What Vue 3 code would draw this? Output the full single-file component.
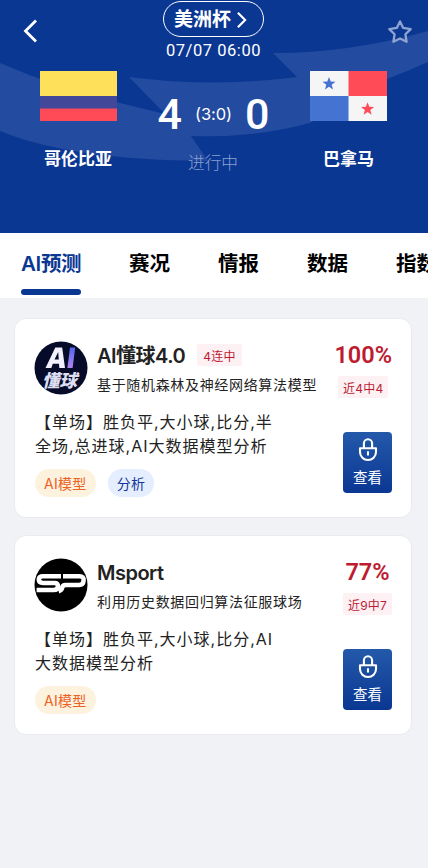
<script setup>
const tabs = ['AI预测', '赛况', '情报', '数据', '指数']
const cards = [
  { logo: 'ai', name: 'AI懂球4.0', streak: '4连中', sub: '基于随机森林及神经网络算法模型', rate: '100%', recent: '近4中4', lines: ['【单场】胜负平,大小球,比分,半', '全场,总进球,AI大数据模型分析'], tags: ['AI模型', '分析'] },
  { logo: 'sp', name: 'Msport', streak: '', sub: '利用历史数据回归算法征服球场', rate: '77%', recent: '近9中7', lines: ['【单场】胜负平,大小球,比分,AI', '大数据模型分析'], tags: ['AI模型'] }
]
</script>

<template>
  <div class="page">
    <header class="hero">
      <svg class="swoosh" viewBox="0 0 428 233" aria-hidden="true">
        <path d="M0 63Q58 88 116 102L165 114L129 77Q215 88 297 77L273 53Q350 53 428 31V62Q408 71 387 79L310 123Q255 138 191 136L208 161Q70 160 0 131Z" fill="#234ba0" />
      </svg>
      <svg class="back" viewBox="0 0 16 26" aria-hidden="true"><path d="M14 2.5L3.5 13L14 23.5" fill="none" stroke="#fff" stroke-width="2.8" /></svg>
      <div class="team">
        <svg class="flag" viewBox="0 0 77 50" preserveAspectRatio="none">
          <path fill="#ffe05b" d="M0 0h77v25H0z" /><path fill="#43479a" d="M0 25h77v12.5H0z" /><path fill="#ff4b58" d="M0 37.5h77V50H0z" />
        </svg>
        <div class="team-name">哥伦比亚</div>
      </div>
      <div class="middle">
        <div class="league"><span>美洲杯</span>
          <svg viewBox="0 0 12 20"><path d="M2 2L10 10L2 18" fill="none" stroke="#fff" stroke-width="2.4" /></svg>
        </div>
        <div class="time">07/07 06:00</div>
        <div class="score"><b>4</b><span>(3:0)</span><b>0</b></div>
        <div class="state">进行中</div>
      </div>
      <div class="team away">
        <svg class="flag" viewBox="0 0 77 50" preserveAspectRatio="none">
          <path fill="#f5f5f5" d="M0 0h77v50H0z" /><path fill="#ff4b58" d="M38.5 0H77v25H38.5z" /><path fill="#4573d1" d="M0 25h38.5v25H0z" />
          <path fill="#4573d1" d="M19 6l1.7 4.5 4.8.2-3.8 3 1.3 4.8-4-2.7-4 2.7 1.3-4.8-3.8-3 4.8-.2z" />
          <path transform="translate(38.6 25.3)" fill="#ff4b58" d="M19 6l1.7 4.5 4.8.2-3.8 3 1.3 4.8-4-2.7-4 2.7 1.3-4.8-3.8-3 4.8-.2z" />
        </svg>
        <div class="team-name">巴拿马</div>
      </div>
      <svg class="star" viewBox="0 0 26 26"><path d="M13 2.4L16.2 8.9L23.7 10.1L18.4 15.3L19.6 22.8L13 19.4L6.4 22.8L7.6 15.3L2.3 10.1L9.8 8.9Z" fill="none" stroke="#8fa4d2" stroke-width="2.3" stroke-linejoin="round" /></svg>
    </header>
    <nav class="tabs">
      <div v-for="(t, i) in tabs" :key="t" class="tab" :class="{ active: i === 0 }"><span>{{ t }}</span></div>
    </nav>
    <main class="list">
      <article v-for="c in cards" :key="c.name" class="card">
        <div class="top">
          <svg v-if="c.logo === 'ai'" class="avatar" viewBox="0 0 54 54">
            <defs>
              <linearGradient id="g" x1="0" y1="0" x2="0" y2="1"><stop offset="0" stop-color="#5267ef" /><stop offset="1" stop-color="#b184f0" /></linearGradient>
              <clipPath id="round"><circle cx="27" cy="27" r="26.5" /></clipPath>
            </defs>
            <circle cx="27" cy="27" r="26.5" fill="#050b28" />
            <path fill="#f1f0fc" fill-rule="evenodd" d="M11.5 27L21.3 6.4H28.2L31 27H25.3L25 22.8H18.8L17.3 27ZM20.5 18.5H24.8L24.2 11Z" />
            <path fill="url(#g)" d="M36 6.4H41.2L38.6 27H33.4Z" />
            <g clip-path="url(#round)"><text x="8" y="46" class="logo-text">懂球</text></g>
          </svg>
          <svg v-else class="avatar" viewBox="0 0 54 54">
            <circle cx="27" cy="27" r="26.5" fill="#000" />
            <g fill="none" stroke="#fff" stroke-width="4.6" stroke-linejoin="round">
              <path d="M27 18.2H9Q4.8 18.2 4.8 21.6Q4.8 25 9 25H20.5Q24 25 24 28.3Q24 32 19.5 32H2.6" />
              <path d="M29 18.2H45.5Q50 18.2 49.6 22.6Q49.2 27 45 27H31.5Q28.8 27 28.3 29.3Q27.6 32.4 24.6 33.2" />
            </g>
          </svg>
          <div class="title">
            <div class="name-row"><h2>{{ c.name }}</h2><span v-if="c.streak" class="badge">{{ c.streak }}</span></div>
            <p>{{ c.sub }}</p>
          </div>
          <div class="rate"><strong>{{ c.rate }}</strong><span class="badge">{{ c.recent }}</span></div>
        </div>
        <div class="bottom">
          <div class="info">
            <div class="desc"><div v-for="l in c.lines" :key="l">{{ l }}</div></div>
            <div class="tags"><span v-for="(t, i) in c.tags" :key="t" :class="{ blue: i === 1 }">{{ t }}</span></div>
          </div>
          <button class="view">
            <svg viewBox="0 0 20 26"><path d="M5.9 11V6.3a4.1 4.1 0 0 1 8.2 0V11M2 11.2H18V15a8 8 0 0 1-16 0ZM10 14.2V18.4" fill="none" stroke="#fff" stroke-width="2.1" stroke-linejoin="round" /></svg>
            <span>查看</span>
          </button>
        </div>
      </article>
    </main>
  </div>
</template>

<style>
body { margin: 0; background: #f0f2f5; overflow: hidden; }
</style>
<style scoped>
* { box-sizing: border-box; }
.page { width: 428px; height: 868px; overflow: hidden; background: #f0f2f5; color: #222; font-family: Inter, "Noto Sans CJK SC", sans-serif; white-space: nowrap; }
.hero { position: relative; isolation: isolate; display: grid; grid-template-columns: 39px 78px 193px 77px 41px; height: 233px; background: #0a3792; color: #fff; overflow: hidden; }
.swoosh { position: absolute; z-index: -1; inset: 0; width: 428px; height: 233px; }
.back { width: 16px; height: 26px; margin: 18px 0 0 22px; }
.star { width: 26px; height: 26px; margin: 19px 0 0 0; }
.team { padding-top: 71px; display: flex; flex-direction: column; align-items: center; }
.flag { width: 77px; height: 50px; flex: none; }
.team-name { margin-top: 26px; line-height: 24px; font-size: 17px; font-weight: 700; }
.middle { display: flex; flex-direction: column; align-items: center; padding-top: 1px; }
.league { width: 101px; height: 36px; padding: 2px 6px 0 0; border: 1.5px solid #fff; border-radius: 18px; display: flex; align-items: center; justify-content: center; gap: 5px; font-size: 19px; font-weight: 700; line-height: 30px; }
.league svg { width: 11px; height: 18px; }
.time { margin-top: 4px; font: 16.5px/20px Roboto, sans-serif; letter-spacing: .55px; }
.score { display: flex; align-items: center; justify-content: center; gap: 13px; height: 50px; margin-top: 28px; }
.score b { font-family: Roboto, sans-serif; font-size: 43px; font-weight: 500; line-height: 50px; }
.score span { font-size: 16.5px; line-height: 22px; letter-spacing: -.1px; }
.state { margin: 12px 1px 0 0; font-size: 16.7px; line-height: 24px; font-weight: 300; color: #8ba0d0; }
.tabs { display: flex; gap: 48px; height: 65px; padding-left: 21px; background: #fff; color: #000; overflow: hidden; }
.tab { flex: none; width: 41px; height: 62px; padding-top: 16px; font-size: 20.5px; line-height: 30px; font-weight: 700; }
.tab.active { width: 60px; color: #0a3792; font-weight: 600; letter-spacing: -.35px; display: flex; flex-direction: column; justify-content: space-between; }
.tab.active::after { content: ""; height: 6px; border-radius: 3px; background: #0a3792; }
.list { display: flex; flex-direction: column; gap: 17px; padding: 20px 16px 0 14px; }
.card { height: 200px; padding: 22px 19px 19px 20px; border-radius: 12px; border: 1px solid #e9ebee; background: #fff; }
.top { display: flex; height: 62px; }
.avatar { width: 54px; height: 54px; flex: none; margin-left: -1px; }
.logo-text { font: italic 900 17.5px "Noto Sans CJK SC", sans-serif; fill: #dedff2; }
.title { flex: 1; margin-left: 9px; }
.name-row { display: flex; align-items: center; gap: 12px; height: 28px; }
h2 { margin: 0; padding-top: 1px; font-size: 20px; line-height: 28px; font-weight: 600; letter-spacing: -.5px; }
p { margin: 5px 0 0; font-size: 14px; line-height: 22px; letter-spacing: .67px; }
.badge { display: flex; align-items: center; height: 22px; padding: 0 6px; background: #fdf1f3; color: #be1b35; font-size: 12px; letter-spacing: .2px; border-radius: 2px; }
.rate { display: flex; flex-direction: column; align-items: center; gap: 7px; }
.rate strong { font-family: Roboto, sans-serif; font-size: 23.5px; line-height: 28px; font-weight: 600; color: #be1b30; }
.rate .badge { padding: 0 5px; }
.bottom { display: flex; justify-content: space-between; height: 97px; }
.info { padding-top: 7px; }
.desc { font-size: 16px; line-height: 24px; letter-spacing: 1px; }
.tags { display: flex; gap: 12px; margin-top: 11px; }
.tags span { height: 28px; padding: 0 9px; border-radius: 14px; background: #fdf2de; color: #ed611f; font-size: 14px; line-height: 29px; letter-spacing: .3px; }
.tags .blue { background: #e4eefe; color: #12379a; }
.view { width: 49px; height: 61px; margin: 29px 0 0; padding: 5px 0 0; border: 0; border-radius: 4px; background: linear-gradient(#2459aa, #0a3792); color: #fff; font: 14.5px/21px "Noto Sans CJK SC", sans-serif; display: flex; flex-direction: column; align-items: center; gap: 3px; }
.view svg { width: 20px; height: 26px; }
</style>
